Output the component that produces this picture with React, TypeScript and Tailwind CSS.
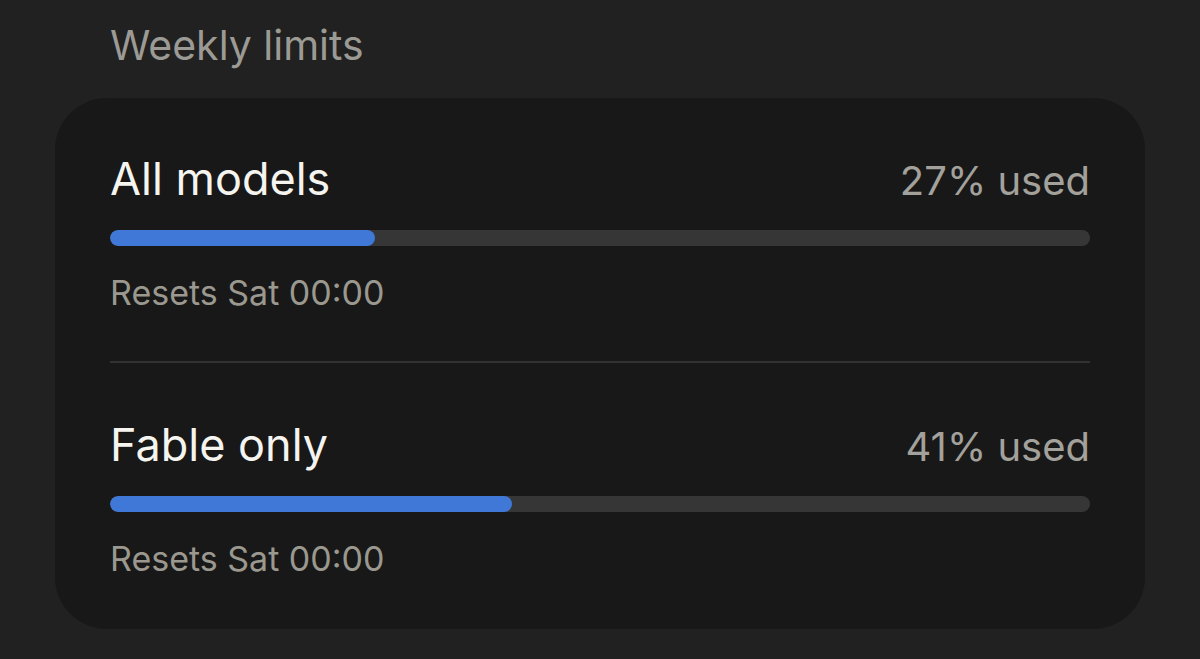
import React from 'react';

type Limit = {
  label: string;
  used: number;
  resets: string;
};

const limits: Limit[] = [
  { label: 'All models', used: 27, resets: 'Resets Sat 00:00' },
  { label: 'Fable only', used: 41, resets: 'Resets Sat 00:00' },
];

const LimitRow = ({ label, used, resets }: Limit) => (
  <div className="flex flex-col">
    <div className="flex items-baseline justify-between">
      <span className="text-[45px] leading-[52px] text-[#f5f4ef]">{label}</span>
      <span className="text-[40px] leading-[52px] text-[#a3a19b]">{used}% used</span>
    </div>
    {/* usage bar */}
    <div className="mt-[23px] h-4 w-full overflow-hidden rounded-full bg-[#363636]">
      <div className="h-full rounded-full bg-[#3f78d6]" style={{ width: `${used}%` }} />
    </div>
    <span className="mt-[27px] text-[34px] leading-[40px] text-[#9a988f]">{resets}</span>
  </div>
);

export default function App() {
  return (
    <div
      className="flex h-[659px] w-[1200px] flex-col overflow-hidden bg-[#212121] px-[55px] pt-[20px]"
      style={{ fontFamily: 'Inter, "Noto Sans", sans-serif' }}
    >
      <h2 className="pl-[55px] text-[41px] leading-[50px] font-normal text-[#9c9a94]">Weekly limits</h2>
      <div className="mt-[28px] flex flex-col rounded-[52px] bg-[#181818] px-[55px] pt-[55px] pb-[50px]">
        <LimitRow {...limits[0]} />
        <div className="mt-[48px] mb-[56px] h-[2px] bg-[#323232]" />
        <LimitRow {...limits[1]} />
      </div>
    </div>
  );
}
